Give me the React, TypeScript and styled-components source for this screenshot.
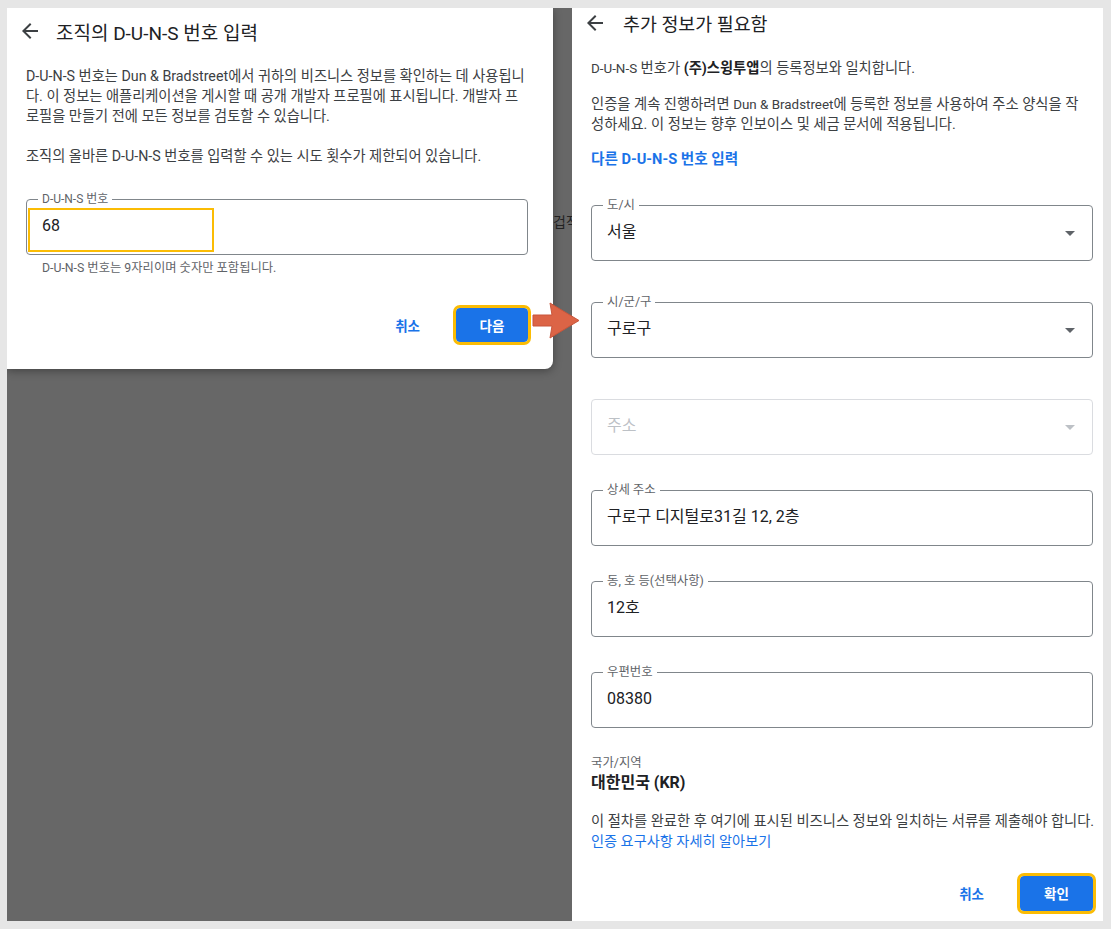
import React from 'react';
import styled, { createGlobalStyle } from 'styled-components';

const Global = createGlobalStyle`
  html, body { margin: 0; padding: 0; background: #e6e6e6; }
  body { font-family: Roboto, "Noto Sans CJK KR", sans-serif; color: #202124; }
  * { box-sizing: border-box; }
`;

const Page = styled.div`
  position: relative;
  width: 1111px;
  height: 929px;
  padding: 8px 8px 8px 7px;
  display: flex;
  overflow: hidden;
  background: #e6e6e6;
`;

const LeftShot = styled.div`
  position: relative;
  width: 565px;
  height: 100%;
  background: #676767;
  overflow: hidden;
`;

const BehindText = styled.span`
  position: absolute;
  left: 546px;
  top: 203px;
  font-size: 14px;
  color: #222;
  white-space: nowrap;
`;

const Dialog = styled.div`
  width: 546px;
  background: #fff;
  border-bottom-right-radius: 8px;
  box-shadow: 0 2px 8px rgba(0, 0, 0, 0.35);
  display: flex;
  flex-direction: column;
  padding: 0 25px 26px 19px;
`;

const Header = styled.div<{ $h: number; $gap: number }>`
  display: flex;
  align-items: center;
  height: ${(p) => p.$h}px;
  flex: none;
  margin-left: -8px;
  gap: ${(p) => p.$gap}px;
`;

const BackIcon = styled.svg`
  width: 24px;
  height: 24px;
  fill: #3c4043;
  flex: none;
`;

const Title = styled.h1<{ $size: number }>`
  margin: 0;
  font-size: ${(p) => p.$size}px;
  font-weight: 400;
  color: #202124;
  white-space: nowrap;
`;

const Para = styled.p<{ $mt: number; $size: number; $lines: number }>`
  margin: ${(p) => p.$mt}px 0 0;
  height: ${(p) => p.$lines * 20}px;
  flex: none;
  font-size: ${(p) => p.$size}px;
  line-height: 20px;
  color: #3c4043;
  white-space: nowrap;
  b { font-weight: 700; color: #202124; }
`;

const Latin = styled.span`
  font-size: 13.4px;
  line-height: 1;
`;

const TextLink = styled.a<{ $bold?: boolean; $mt: number; $size: number }>`
  display: block;
  flex: none;
  height: 20px;
  margin-top: ${(p) => p.$mt}px;
  font-size: ${(p) => p.$size}px;
  line-height: 20px;
  color: #1a73e8;
  font-weight: ${(p) => (p.$bold ? 700 : 400)};
  text-decoration: none;
  white-space: nowrap;
`;

const Field = styled.div<{ $mt: number; $disabled?: boolean }>`
  position: relative;
  flex: none;
  margin-top: ${(p) => p.$mt}px;
  height: 56px;
  border: 1px solid ${(p) => (p.$disabled ? '#dadce0' : '#80868b')};
  border-radius: 4px;
  display: flex;
  align-items: center;
  padding: 0 17px 0 15px;
`;

const FieldLabel = styled.span<{ $size: number }>`
  position: absolute;
  left: 11px;
  top: -8px;
  padding: 0 4px;
  background: #fff;
  font-size: ${(p) => p.$size}px;
  line-height: 14px;
  color: #5f6368;
  white-space: nowrap;
`;

const Value = styled.span<{ $muted?: boolean }>`
  flex: 1;
  font-size: 16px;
  line-height: 20px;
  margin-top: -2px;
  color: ${(p) => (p.$muted ? '#bdc1c6' : '#202124')};
  white-space: nowrap;
`;

const Caret = styled.span<{ $muted?: boolean }>`
  width: 0;
  height: 0;
  border-left: 5px solid transparent;
  border-right: 5px solid transparent;
  border-top: 5px solid ${(p) => (p.$muted ? '#bdc1c6' : '#5f6368')};
`;

const Highlight = styled.span`
  position: absolute;
  left: 1px;
  top: 8px;
  width: 186px;
  height: 44px;
  border: 2px solid #fbbc04;
  pointer-events: none;
`;

const Helper = styled.div`
  margin-top: 5px;
  height: 16px;
  padding-left: 16px;
  font-size: 12.3px;
  line-height: 16px;
  color: #5f6368;
  white-space: nowrap;
`;

const Actions = styled.div<{ $mt: number }>`
  margin-top: ${(p) => p.$mt}px;
  flex: none;
  display: flex;
  justify-content: flex-end;
  align-items: center;
  gap: 24px;
`;

const TextButton = styled.button`
  border: none;
  background: none;
  padding: 8px 12px;
  font-family: inherit;
  font-size: 13.5px;
  font-weight: 700;
  color: #1a73e8;
`;

const Primary = styled.button<{ $w: number; $h: number }>`
  width: ${(p) => p.$w}px;
  height: ${(p) => p.$h}px;
  border: none;
  border-radius: 4px;
  background: #1a73e8;
  color: #fff;
  font-family: inherit;
  font-size: 13.5px;
  font-weight: 700;
  outline: 3px solid #fbbc04;
  outline-offset: 0;
`;

const RightPanel = styled.div`
  width: 531px;
  height: 100%;
  background: #fff;
  padding: 0 10px 0 19px;
  display: flex;
  flex-direction: column;
`;

const SmallLabel = styled.div`
  margin-top: 27px;
  height: 16px;
  font-size: 12.4px;
  line-height: 16px;
  color: #5f6368;
`;

const Country = styled.div`
  margin-top: 1px;
  height: 22px;
  font-size: 16px;
  line-height: 22px;
  font-weight: 700;
  color: #202124;
`;

const ArrowMark = styled.svg`
  position: absolute;
  left: 532px;
  top: 302px;
  width: 50px;
  height: 38px;
`;

const Back = () => (
  <BackIcon viewBox="0 0 24 24">
    <path d="M20 11H7.83l5.59-5.59L12 4l-8 8 8 8 1.41-1.41L7.83 13H20v-2z" />
  </BackIcon>
);

export default function App() {
  return (
    <>
      <Global />
      <Page>
        <LeftShot>
          <BehindText>겁작</BehindText>
          <Dialog>
            <Header $h={46} $gap={14}>
              <Back />
              <Title $size={19}>조직의 D-U-N-S 번호 입력</Title>
            </Header>
            <Para $mt={12} $size={14.25} $lines={3}>
              D-U-N-S 번호는 Dun &amp; Bradstreet에서 귀하의 비즈니스 정보를 확인하는 데 사용됩니
              <br />
              다. 이 정보는 애플리케이션을 게시할 때 공개 개발자 프로필에 표시됩니다. 개발자 프
              <br />
              로필을 만들기 전에 모든 정보를 검토할 수 있습니다.
            </Para>
            <Para $mt={20} $size={14.25} $lines={1}>
              조직의 올바른 D-U-N-S 번호를 입력할 수 있는 시도 횟수가 제한되어 있습니다.
            </Para>
            <Field $mt={33}>
              <FieldLabel $size={12}>D-U-N-S 번호</FieldLabel>
              <Value>68</Value>
              <Highlight />
            </Field>
            <Helper>D-U-N-S 번호는 9자리이며 숫자만 포함됩니다.</Helper>
            <Actions $mt={31}>
              <TextButton>취소</TextButton>
              <Primary $w={72} $h={34}>다음</Primary>
            </Actions>
          </Dialog>
        </LeftShot>
        <RightPanel>
          <Header $h={30} $gap={16}>
            <Back />
            <Title $size={18.4}>추가 정보가 필요함</Title>
          </Header>
          <Para $mt={20} $size={14.3} $lines={1}>
            <Latin>D-U-N-S</Latin> 번호가 <b>(주)스윙투앱</b>의 등록정보와 일치합니다.
          </Para>
          <Para $mt={16} $size={14.3} $lines={2}>
            인증을 계속 진행하려면 <Latin>Dun &amp; Bradstreet</Latin>에 등록한 정보를 사용하여 주소 양식을 작
            <br />
            성하세요. 이 정보는 향후 인보이스 및 세금 문서에 적용됩니다.
          </Para>
          <TextLink $bold $mt={15} $size={14.6}>다른 D-U-N-S 번호 입력</TextLink>
          <Field $mt={36}>
            <FieldLabel $size={12.4}>도/시</FieldLabel>
            <Value>서울</Value>
            <Caret />
          </Field>
          <Field $mt={41}>
            <FieldLabel $size={12.4}>시/군/구</FieldLabel>
            <Value>구로구</Value>
            <Caret />
          </Field>
          <Field $mt={41} $disabled>
            <Value $muted>주소</Value>
            <Caret $muted />
          </Field>
          <Field $mt={35}>
            <FieldLabel $size={12.4}>상세 주소</FieldLabel>
            <Value>구로구 디지털로31길 12, 2층</Value>
          </Field>
          <Field $mt={35}>
            <FieldLabel $size={12.4}>동, 호 등(선택사항)</FieldLabel>
            <Value>12호</Value>
          </Field>
          <Field $mt={35}>
            <FieldLabel $size={12.4}>우편번호</FieldLabel>
            <Value>08380</Value>
          </Field>
          <SmallLabel>국가/지역</SmallLabel>
          <Country>대한민국 (KR)</Country>
          <Para $mt={17} $size={14.3} $lines={1}>
            이 절차를 완료한 후 여기에 표시된 비즈니스 정보와 일치하는 서류를 제출해야 합니다.
          </Para>
          <TextLink $mt={0} $size={14.2}>인증 요구사항 자세히 알아보기</TextLink>
          <Actions $mt={24}>
            <TextButton>취소</TextButton>
            <Primary $w={73} $h={35}>확인</Primary>
          </Actions>
        </RightPanel>
        <ArrowMark viewBox="0 0 50 38">
          <path
            d="M1 13 H20 L18 1 L47 18.5 L18 36 L20 24 H1 Z"
            fill="#dc6446"
            stroke="#c8553a"
            strokeWidth="1"
          />
        </ArrowMark>
      </Page>
    </>
  );
}
